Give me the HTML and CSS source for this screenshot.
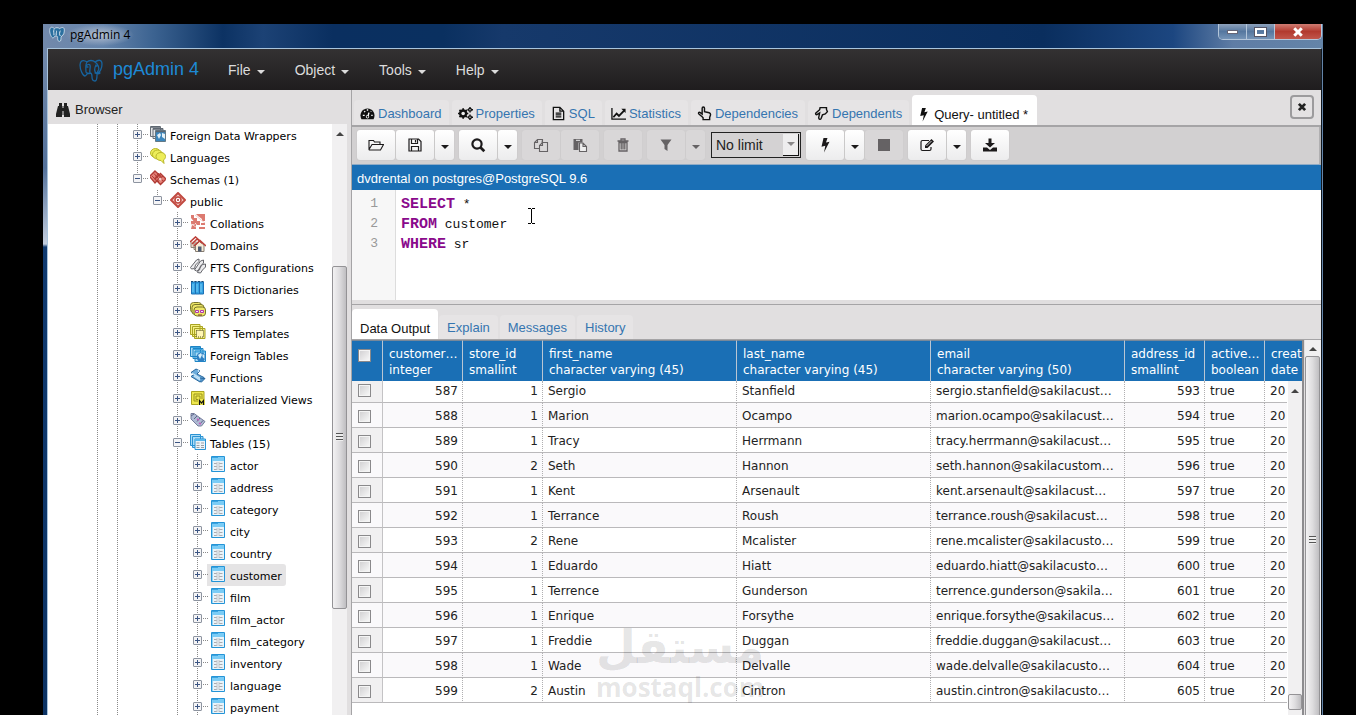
FILE: index.html
```html
<!DOCTYPE html>
<html lang="en">
<head>
<meta charset="UTF-8">
<meta name="viewport" content="width=device-width,initial-scale=1.0">
<title>pgAdmin 4</title>
<link rel="stylesheet" href="styles.css">
</head>
<body>

<svg class="sprite" width="0" height="0" aria-hidden="true">
	<symbol id="elephant" viewBox="0 0 24 24">
		<path d="M8 4C4 1 1 3 1 7c0 5 3 11 5 11 1 0 2-2 3-3M8 4c2-2 6-2 8 0 4-3 7-2 7 2 0 4-2 8-4 9l-2 0M8 4C6 7 7 11 7 14c1 2 3 2 4 1 2 0 2 2 2 4 0 3 1 4 3 4s2-3 2-6c0-2 0-3 1-4 2-3 0-7-3-9M11 15c-1-3 1-5 0-8-1-1-3 0-4 1M17 15c-2-2-1-6 0-8M16 15c2 1 4 1 5 0M8 9h1M17 8h1" fill="none" stroke="currentColor" stroke-width="1.3" stroke-linecap="round"/>
	</symbol>
	<symbol id="elephant-solid" viewBox="0 0 24 24">
		<path d="M8 4C4 0 1 2 1 7c0 5 3 11 5 11 1 0 2-2 3-3l2 0c2 0 2 2 2 4 0 3 1 4 3 4s2-3 2-6l1-2c3-1 4-5 4-9s-3-5-7-2c-2-2-6-2-8 0z" fill="currentColor" stroke="#dce9f2" stroke-width="1.200"/><path d="M7.500 5c-1 3 0 6 0 9M11 14c-1-3 1-5 0-7M17 15c-2-2-1-6 0-8" fill="none" stroke="#dce9f2" stroke-width="1.500"/>
	</symbol>
	<symbol id="binoculars" viewBox="0 0 16 16">
		<path d="M4 1h3v3H4zM9 1h3v3H9zM3 4h4.500v9H7v2H1v-3zM8.500 4H13l2 8v3H9v-2h-.500zM7 6h2v3H7z"/>
	</symbol>
	<symbol id="dashboard" viewBox="0 0 16 16">
		<path d="M1.500 14A7.500 7.500 0 1 1 14.500 14z"/>
		<path d="M3 10h2M4.500 5.500l1 1M8 3.500v1.500M12 5.500l-.500.500M12 10h1.500M8.500 11l1-4" stroke="#fff" stroke-width="1.500" fill="none"/><circle cx="8" cy="11.500" r="1.800" fill="#fff"/><circle cx="8" cy="11.500" r="1"/>
	</symbol>
	<symbol id="cogs" viewBox="0 0 16 16">
		<circle cx="5.500" cy="8" r="3.200" fill="none" stroke="currentColor" stroke-width="2.600"/>
		<path d="M5.500 2.500v11M0 8h11M1.600 4.100l7.800 7.800M9.400 4.100l-7.800 7.800" stroke="currentColor" stroke-width="1.800"/><circle cx="5.500" cy="8" r="1.900" fill="#eee"/>
		<circle cx="12.800" cy="4" r="1.500" fill="none" stroke="currentColor" stroke-width="1.500"/><path d="M12.800 1v1.500M12.800 5.500V7M10 4h1M14.500 4h1.500M12.800 9v1.500M12.800 13.500V15M10 12h1M14.500 12h1.500" stroke="currentColor" stroke-width="1.500"/>
		<circle cx="12.800" cy="12" r="1.500" fill="none" stroke="currentColor" stroke-width="1.500"/>
	</symbol>
	<symbol id="file" viewBox="0 0 16 16">
		<path d="M2.500 1.500h7l4 4v9h-11zM9.500 1.500v4h4M5 7.500h6M5 9.500h6M5 11.500h6" fill="none" stroke="currentColor" stroke-width="1.400"/>
	</symbol>
	<symbol id="chart" viewBox="0 0 16 16">
		<path d="M1 2v12h15" fill="none" stroke="currentColor" stroke-width="1.400"/><path d="M2.500 12l3.500-4 2.500 2.500L14 5" fill="none" stroke="currentColor" stroke-width="2"/><path d="M11 3h4.500v4.500z"/>
	</symbol>
	<symbol id="hand-up" viewBox="0 0 16 16">
		<path d="M5.500 11.500L2 8.500c-1-1 0-2.500 1.500-1.500l2 1.500V2.500c0-2 2.500-2 2.500 0V6l5 1.200c1.300.4 1.500 1 1.500 2l-1 3v2.300h-7v-2z" fill="none" stroke="currentColor" stroke-width="1.500"/>
	</symbol>
	<symbol id="hand-down" viewBox="0 0 16 16">
		<path d="M6 4L2 7.500c-1 1.200.5 2.200 1.500 1.500l2.500-1.500-1 5c0 2 2 2.200 2.700.5L9 9.500l3-1 2.300-2.500-1-2.300V1.700H6.500z" fill="none" stroke="currentColor" stroke-width="1.500"/>
	</symbol>
	<symbol id="bolt" viewBox="0 0 16 16">
		<path d="M6.500 1h4L9 5.500l3.500-.7L7 15.500l1.300-6.700-3.800.900z"/>
	</symbol>
	<symbol id="close" viewBox="0 0 16 16">
		<path d="M3 3l10 10M13 3L3 13" stroke="currentColor" stroke-width="4.500"/>
	</symbol>
	<symbol id="folder" viewBox="0 0 16 16">
		<path d="M1 12.500V3.500h4.500l1 1.500h5.500v2.500M1 12.500l3-5h11.500l-3 5.500H1.300z" fill="none" stroke="currentColor" stroke-width="1.100"/>
	</symbol>
	<symbol id="save" viewBox="0 0 16 16">
		<path d="M2 2h9.500L14 4.500V14H2zM4.500 14V9.500h7V14M4.500 2v4.500h6V2M8.500 3v2.500" fill="none" stroke="currentColor" stroke-width="1.200"/>
	</symbol>
	<symbol id="search" viewBox="0 0 16 16">
		<circle cx="7" cy="7" r="4.600" fill="none" stroke="currentColor" stroke-width="2.200"/><path d="M10.300 10.300l4 4" stroke="currentColor" stroke-width="2.700"/>
	</symbol>
	<symbol id="copy" viewBox="0 0 16 16">
		<path d="M6.500 11.500h-5v-6L4.500 2.500h5v3M4.500 2.500v3h-3M6.500 13.500v-5l3-3h5v9h-8zM9.500 5.500v3h-3M9.500 2.500l-.500 3" fill="none" stroke="currentColor" stroke-width="1.100"/>
	</symbol>
	<symbol id="paste" viewBox="0 0 16 16">
		<path d="M1.500 2h9v3.500h-4V13h-5z"/><path d="M4 3.300h4" stroke="#eee"/><path d="M7.500 6h3.500l3.500 3.500v5h-7zM11 6v3.500h3.500" fill="#eee" stroke="currentColor" stroke-width="1.100"/>
	</symbol>
	<symbol id="trash" viewBox="0 0 16 16">
		<path d="M2.500 4h11M6 3.500V2h4v1.500M4 5.500v8.500h8V5.500zM6.200 6v6.500M8 6v6.500M9.800 6v6.500" fill="none" stroke="currentColor" stroke-width="1.300"/>
	</symbol>
	<symbol id="filter" viewBox="0 0 16 16"><path d="M2.500 2.500h11L9.500 8v6l-3-2V8z"/></symbol>
	<symbol id="stop" viewBox="0 0 16 16"><path d="M2 2h12v12H2z"/></symbol>
	<symbol id="edit" viewBox="0 0 16 16">
		<path d="M10 3.500H3.500Q2 3.500 2 5v7q0 1.500 1.500 1.500h7Q12 13.500 12 12v-2" fill="none" stroke="currentColor" stroke-width="1.200"/><path d="M6 11V8.500L12.500 2 15 4.500 8.500 11z"/><path d="M7.500 9l5-5" stroke="#fff" stroke-width=".8"/>
	</symbol>
	<symbol id="download" viewBox="0 0 16 16">
		<path d="M6.500 1.500h3V6H13L8 10.500 3 6h3.500zM1 10.500h4l3 2.500 3-2.500h4v4H1z"/>
	</symbol>
	<symbol id="caret" viewBox="0 0 8 4"><path d="M0 0h8L4 4z"/></symbol>
	<symbol id="caret-up" viewBox="0 0 8 4"><path d="M0 4h8L4 0z"/></symbol>

	<symbol id="i-wrapper" viewBox="0 0 16 16">
		<path d="M.5.5h10v10H.5zM3 2.500h10v10H3z" fill="#e4e6e8" stroke="#687078"/><path d="M5.500 4.500h10v11h-10z" fill="#3b86bd" stroke="#647985"/><path d="M1 1h9M3 3h10M6 5.500h9" stroke="#5c6670" stroke-width="1.500"/><path d="M7 9l3-2 1 2-2 4zM12 7l3 1v5l-3-2z" fill="#e2f0f8"/>
	</symbol>
	<symbol id="i-language" viewBox="0 0 16 16">
		<g fill="#eded59" stroke="#b8b62b"><ellipse cx="5.500" cy="5" rx="5" ry="4.500"/><ellipse cx="7.500" cy="6.500" rx="5" ry="4.500"/><path d="M11 4.500c3 0 4.500 2 4.500 4 0 1.500-1 3-2 3.500l.5 3.500-3-3c-3 0-5-1.500-5-4 0-2.500 2-4 5-4z"/></g>
	</symbol>
	<symbol id="i-schemas" viewBox="0 0 16 16">
		<path d="M5 1l6 5.500L5 13-.500 6.500zM10.500 3.500L16 9l-5.500 5.500L5 9z" fill="#e58279" stroke="#b03b35" stroke-width="1.300"/><path d="M2 6l4 4M4 3.500l6 7M7 4l6 7M8 12l5-6M4 9l5-6" stroke="#b03b35"/><path d="M10 7.500L12 9l-2 2-1.500-2z" fill="#f5d0cb"/>
	</symbol>
	<symbol id="i-schema" viewBox="0 0 16 16">
		<path d="M8 1l7 7-7 7-7-7z" fill="#f5c9c4" stroke="#c14a41" stroke-width="2" stroke-linejoin="round"/><circle cx="8" cy="8" r="3" fill="#fff" stroke="#c14a41" stroke-width="1.600"/><circle cx="8" cy="8" r="1" fill="#a33"/>
	</symbol>
	<symbol id="i-collation" viewBox="0 0 16 16">
		<path d="M1 1h3v3h3v3h3v4H7L1 4zM6 0h9v7h-3V5L8 2zM1 7h4v3H1zM2 11l4-1v5H1zM11 9h4v2h-4zM9 13h6v2H9z" fill="#dc7a70"/><path d="M5 1l10 8M1 10l5 3" stroke="#f3cfca"/>
	</symbol>
	<symbol id="i-domain" viewBox="0 0 16 16">
		<path d="M1 5.500v6h5v-6M4 6.500v7h6v-7" fill="#e9d8c8" stroke="#8f8379"/><path d="M5.500 9v6.500h8.500V9L9.500 5.500z" fill="#f6ecd7" stroke="#887e72"/><path d="M0 6l5.500-5L10 5M2 8l5-5 5 4M4 10l6-5.500 6 5.500" fill="none" stroke="#bd3f38" stroke-width="1.600"/><path d="M8 10.500h3.500v5H8z" fill="#4c5b72"/>
	</symbol>
	<symbol id="i-config" viewBox="0 0 16 16">
		<path d="M.5 9.500L2.500 7l4-5L9 1v2.500L5.500 7l-1 3.500-3 .500zM4.500 12l2-3 4-6 3-1v3l-3 3-1 4-3 1zM7.500 14.500l1-3 4-5 3-.500v3l-3 3-2 3z" fill="#ececee" stroke="#65666c"/>
	</symbol>
	<symbol id="i-dictionary" viewBox="0 0 16 16">
		<path d="M1.500 2h4v12h-4zM5.500 2h4v12h-4zM9.500 2h4v12h-4z" fill="#35a3e3" stroke="#1d71b5"/><path d="M1 1.500h13" stroke="#1b4c77" stroke-dasharray="2 1.500"/><path d="M3 4v8M7 4v8M11 4v8" stroke="#79cdf6"/>
	</symbol>
	<symbol id="i-parser" viewBox="0 0 16 16">
		<g fill="#eee666" stroke="#78752a"><rect x=".5" y=".5" width="11" height="10" rx="3"/><rect x="2" y="2.500" width="12" height="10" rx="3"/><rect x="4" y="5" width="11.500" height="9" rx="3"/></g><path d="M5.500 8.500h3v2h-3zM10.500 8.500h3v2h-3z" fill="#fae7ff" stroke="#b137a8"/><path d="M8 13h4" stroke="#7c332c"/>
	</symbol>
	<symbol id="i-template" viewBox="0 0 16 16">
		<path d="M.5.5h9.500v10H.5zM2.500 2.500h10v10h-10zM4.500 4.500h10.500v10H4.500z" fill="#f3f085" stroke="#aaa422"/><path d="M6.500 6.500h7v6.500h-7z" fill="#fff6b5" stroke="#4e4b29" stroke-dasharray="1 1"/>
	</symbol>
	<symbol id="i-foreign" viewBox="0 0 16 16">
		<path d="M.5.5h10v10H.5zM3 2.500h10v10H3zM5 5h10.500v10.500H5z" fill="#a9dbf6" stroke="#1e84c4"/><path d="M1 1.500h9M3 3.500h9M5 6h10" stroke="#38a3df"/><circle cx="11" cy="11" r="4.500" fill="#2d7fc3"/><path d="M8 9l3-2 1 2-2 4zM12.500 8l2 1v4l-2-2z" fill="#d8effa"/>
	</symbol>
	<symbol id="i-function" viewBox="0 0 16 16">
		<path d="M1 4.500l5-3.500 4 2-3 3L14 9.500l-4 4.500-9-5.500 3-2z" fill="#6dacdb" stroke="#28679d"/><path d="M2 5l9 6M4 8l6 4M8 2l1 2" stroke="#c9e6f8" stroke-width="1.300"/><path d="M10 10l5 .500-4 4" fill="#4f93ca" stroke="#28679d"/>
	</symbol>
	<symbol id="i-matview" viewBox="0 0 16 16">
		<path d="M1.500 1.500h12.500v13H1.500z" fill="#efe84e" stroke="#aaa422"/><path d="M4 4h8v7H4zM6 6h4v3.500H6z" fill="none" stroke="#99931d"/><path d="M8 9h7v6H8z" fill="#efe84e"/><path d="M9.500 15v-4.500l2 2.500 2-2.500V15" fill="none" stroke="#111" stroke-width="1.200"/>
	</symbol>
	<symbol id="i-sequence" viewBox="0 0 16 16">
		<path d="M1 1.500h3L15 9.500l-3.500 4.500L8 14 1 7z" fill="#afbbd4" stroke="#747c9b"/><path d="M1 4l3-2M4 7l3-3M7 9.500L10 6M10 12l3-3.500" stroke="#5e6789"/><path d="M7 7l2 1M9 11l2 1" stroke="#c260bc" stroke-width="1.500"/>
	</symbol>
	<symbol id="i-tables" viewBox="0 0 16 16">
		<path d="M.5.5h10v11H.5zM2.500 2.500h10.500v11H2.500z" fill="#a9dbf6" stroke="#2b93d3"/><path d="M5 5h10.500v10.500H5z" fill="#ecf4f9" stroke="#2b93d3"/><path d="M5 6h10" stroke="#58b8ec" stroke-width="2"/><path d="M6.500 9h3M11 9h3M6.500 11.500h3M11 11.500h3M6.500 13.500h3M11 13.500h3" stroke="#9b9fa5"/>
	</symbol>
	<symbol id="i-table" viewBox="0 0 16 16">
		<path d="M1.500.5h13v15h-13z" fill="#e9f3f9" stroke="#2494d7"/><path d="M2 3h12" stroke="#7accf6" stroke-width="4"/><path d="M2 1.500h6" stroke="#3aa4e0"/><path d="M2.500 5v10" stroke="#8fd3f7"/><path d="M4 7.500h3M9 7.500h3.500M4 10.500h3M9 10.500h3.500M4 13.500h3M9 13.500h3.500" stroke="#a9abb0"/><path d="M7 6v8M9 6v8" stroke="#c3c5c9"/>
	</symbol>
</svg>

<div class="window">
	<header class="titlebar">
		<svg class="title-icon"><use href="#elephant-solid"/></svg>
		<span class="title-text">pgAdmin 4</span>
		<div class="win-buttons">
			<button class="win-btn" aria-label="Minimize"><i class="glyph-min"></i></button>
			<button class="win-btn" aria-label="Maximize"><i class="glyph-max"></i></button>
			<button class="win-btn win-close" aria-label="Close window"><svg width="14" height="12" viewBox="0 0 16 16"><path d="M3 3l10 10M13 3L3 13" stroke="#fff" stroke-width="4"/></svg></button>
		</div>
	</header>

	<div class="app">
		<nav class="navbar">
			<a class="brand" href="#"><svg><use href="#elephant"/></svg>pgAdmin 4</a>
			<button class="menu">File<svg class="caret"><use href="#caret"/></svg></button>
			<button class="menu">Object<svg class="caret"><use href="#caret"/></svg></button>
			<button class="menu">Tools<svg class="caret"><use href="#caret"/></svg></button>
			<button class="menu">Help<svg class="caret"><use href="#caret"/></svg></button>
		</nav>

		<div class="panes">
			<aside class="browser">
				<h2 class="browser-title"><svg class="icon"><use href="#binoculars"/></svg>Browser</h2>
				<div class="browser-body">
					<ul class="tree">
						<li><ul>
							<li><ul>
								<li><div class="node"><button class="toggle plus" aria-label="Expand"></button><svg><use href="#i-wrapper"/></svg><a href="#">Foreign Data Wrappers</a></div></li>
								<li><div class="node"><button class="toggle plus" aria-label="Expand"></button><svg><use href="#i-language"/></svg><a href="#">Languages</a></div></li>
								<li class="last"><div class="node"><button class="toggle" aria-label="Collapse"></button><svg><use href="#i-schemas"/></svg><a href="#">Schemas (1)</a></div>
									<ul>
										<li class="last"><div class="node"><button class="toggle" aria-label="Collapse"></button><svg><use href="#i-schema"/></svg><a href="#">public</a></div>
											<ul>
												<li><div class="node"><button class="toggle plus" aria-label="Expand"></button><svg><use href="#i-collation"/></svg><a href="#">Collations</a></div></li>
												<li><div class="node"><button class="toggle plus" aria-label="Expand"></button><svg><use href="#i-domain"/></svg><a href="#">Domains</a></div></li>
												<li><div class="node"><button class="toggle plus" aria-label="Expand"></button><svg><use href="#i-config"/></svg><a href="#">FTS Configurations</a></div></li>
												<li><div class="node"><button class="toggle plus" aria-label="Expand"></button><svg><use href="#i-dictionary"/></svg><a href="#">FTS Dictionaries</a></div></li>
												<li><div class="node"><button class="toggle plus" aria-label="Expand"></button><svg><use href="#i-parser"/></svg><a href="#">FTS Parsers</a></div></li>
												<li><div class="node"><button class="toggle plus" aria-label="Expand"></button><svg><use href="#i-template"/></svg><a href="#">FTS Templates</a></div></li>
												<li><div class="node"><button class="toggle plus" aria-label="Expand"></button><svg><use href="#i-foreign"/></svg><a href="#">Foreign Tables</a></div></li>
												<li><div class="node"><button class="toggle plus" aria-label="Expand"></button><svg><use href="#i-function"/></svg><a href="#">Functions</a></div></li>
												<li><div class="node"><button class="toggle plus" aria-label="Expand"></button><svg><use href="#i-matview"/></svg><a href="#">Materialized Views</a></div></li>
												<li><div class="node"><button class="toggle plus" aria-label="Expand"></button><svg><use href="#i-sequence"/></svg><a href="#">Sequences</a></div></li>
												<li><div class="node"><button class="toggle" aria-label="Collapse"></button><svg><use href="#i-tables"/></svg><a href="#">Tables (15)</a></div>
													<ul>
														<li><div class="node"><button class="toggle plus" aria-label="Expand"></button><svg><use href="#i-table"/></svg><a href="#">actor</a></div></li>
														<li><div class="node"><button class="toggle plus" aria-label="Expand"></button><svg><use href="#i-table"/></svg><a href="#">address</a></div></li>
														<li><div class="node"><button class="toggle plus" aria-label="Expand"></button><svg><use href="#i-table"/></svg><a href="#">category</a></div></li>
														<li><div class="node"><button class="toggle plus" aria-label="Expand"></button><svg><use href="#i-table"/></svg><a href="#">city</a></div></li>
														<li><div class="node"><button class="toggle plus" aria-label="Expand"></button><svg><use href="#i-table"/></svg><a href="#">country</a></div></li>
														<li><div class="node selected"><button class="toggle plus" aria-label="Expand"></button><svg><use href="#i-table"/></svg><a href="#">customer</a></div></li>
														<li><div class="node"><button class="toggle plus" aria-label="Expand"></button><svg><use href="#i-table"/></svg><a href="#">film</a></div></li>
														<li><div class="node"><button class="toggle plus" aria-label="Expand"></button><svg><use href="#i-table"/></svg><a href="#">film_actor</a></div></li>
														<li><div class="node"><button class="toggle plus" aria-label="Expand"></button><svg><use href="#i-table"/></svg><a href="#">film_category</a></div></li>
														<li><div class="node"><button class="toggle plus" aria-label="Expand"></button><svg><use href="#i-table"/></svg><a href="#">inventory</a></div></li>
														<li><div class="node"><button class="toggle plus" aria-label="Expand"></button><svg><use href="#i-table"/></svg><a href="#">language</a></div></li>
														<li><div class="node"><button class="toggle plus" aria-label="Expand"></button><svg><use href="#i-table"/></svg><a href="#">payment</a></div></li>
													</ul>
												</li>
											</ul>
										</li>
									</ul>
								</li>
							</ul></li>
						</ul></li>
					</ul>
					<div class="scrollbar tree-scroll">
						<svg class="caret"><use href="#caret-up"/></svg>
						<div class="thumb"><i class="grip"></i></div>
					</div>
				</div>
			</aside>

			<main class="work">
				<div class="tabs">
					<a class="tab" href="#"><svg class="icon"><use href="#dashboard"/></svg>Dashboard</a>
					<a class="tab" href="#"><svg class="icon"><use href="#cogs"/></svg>Properties</a>
					<a class="tab" href="#"><svg class="icon"><use href="#file"/></svg>SQL</a>
					<a class="tab" href="#"><svg class="icon"><use href="#chart"/></svg>Statistics</a>
					<a class="tab" href="#"><svg class="icon"><use href="#hand-up"/></svg>Dependencies</a>
					<a class="tab" href="#"><svg class="icon"><use href="#hand-down"/></svg>Dependents</a>
					<a class="tab active" href="#"><svg class="icon"><use href="#bolt"/></svg>Query- untitled *</a>
					<button class="tab-close" aria-label="Close tab"><svg><use href="#close"/></svg></button>
				</div>

				<div class="toolbar">
					<div class="group">
						<button class="btn" aria-label="Open file"><svg class="icon"><use href="#folder"/></svg></button>
						<button class="btn" aria-label="Save"><svg class="icon"><use href="#save"/></svg></button>
						<button class="btn drop" aria-label="Save options"><svg class="caret"><use href="#caret"/></svg></button>
					</div>
					<div class="group">
						<button class="btn" aria-label="Find"><svg class="icon"><use href="#search"/></svg></button>
						<button class="btn drop" aria-label="Find options"><svg class="caret"><use href="#caret"/></svg></button>
					</div>
					<div class="group">
						<button class="btn" disabled aria-label="Copy"><svg class="icon"><use href="#copy"/></svg></button>
						<button class="btn" disabled aria-label="Paste"><svg class="icon"><use href="#paste"/></svg></button>
					</div>
					<div class="group">
						<button class="btn" disabled aria-label="Delete"><svg class="icon"><use href="#trash"/></svg></button>
					</div>
					<div class="group">
						<button class="btn" disabled aria-label="Filter"><svg class="icon"><use href="#filter"/></svg></button>
						<button class="btn drop" disabled aria-label="Filter options"><svg class="caret"><use href="#caret"/></svg></button>
					</div>
					<label class="limit">
						<select aria-label="Row limit"><option>No limit</option></select>
						<span class="limit-arrow"><svg class="caret"><use href="#caret"/></svg></span>
					</label>
					<div class="group">
						<button class="btn" aria-label="Execute"><svg class="icon"><use href="#bolt"/></svg></button>
						<button class="btn drop" aria-label="Execute options"><svg class="caret"><use href="#caret"/></svg></button>
						<button class="btn" disabled aria-label="Stop"><svg class="icon"><use href="#stop"/></svg></button>
					</div>
					<div class="group">
						<button class="btn" aria-label="Edit"><svg class="icon"><use href="#edit"/></svg></button>
						<button class="btn drop" aria-label="Edit options"><svg class="caret"><use href="#caret"/></svg></button>
					</div>
					<div class="group">
						<button class="btn" aria-label="Download as CSV"><svg class="icon"><use href="#download"/></svg></button>
					</div>
				</div>

				<div class="connection">dvdrental on postgres@PostgreSQL 9.6</div>

				<div class="editor">
					<div class="gutter"><div>1</div><div>2</div><div>3</div></div>
					<div class="code" contenteditable="true" spellcheck="false" role="textbox" aria-label="Query">
						<div><b>SELECT</b> *</div>
						<div><b>FROM</b> customer</div>
						<div><b>WHERE</b> sr</div>
					</div>
					<svg class="ibeam" viewBox="0 0 7 16"><path d="M0 .5h3M4 .5h3M3.500 1v14M0 15.500h3M4 15.500h3" stroke="#000"/></svg>
				</div>

				<div class="tabs output-tabs">
					<a class="tab active" href="#">Data Output</a>
					<a class="tab" href="#">Explain</a>
					<a class="tab" href="#">Messages</a>
					<a class="tab" href="#">History</a>
				</div>

				<div class="output">
					<div class="grid">
						<table>
							<colgroup><col class="c-check"><col class="c-num"><col class="c-num"><col class="c-text"><col class="c-text"><col class="c-text"><col class="c-num"><col class="c-bool"><col class="c-num"></colgroup>
							<thead>
								<tr>
									<th><input type="checkbox" aria-label="Select all rows"></th>
									<th>customer…<br>integer</th>
									<th>store_id<br>smallint</th>
									<th>first_name<br>character varying (45)</th>
									<th>last_name<br>character varying (45)</th>
									<th>email<br>character varying (50)</th>
									<th>address_id<br>smallint</th>
									<th>active…<br>boolean</th>
									<th>creat<br>date</th>
								</tr>
							</thead>
							<tbody>
								<tr class="cut"><td><input type="checkbox" aria-label="Row 587"></td><td class="num">587</td><td class="num">1</td><td>Sergio</td><td>Stanfield</td><td>sergio.stanfield@sakilacust…</td><td class="num">593</td><td>true</td><td>20</td></tr>
								<tr><td><input type="checkbox" aria-label="Row 588"></td><td class="num">588</td><td class="num">1</td><td>Marion</td><td>Ocampo</td><td>marion.ocampo@sakilacust…</td><td class="num">594</td><td>true</td><td>20</td></tr>
								<tr><td><input type="checkbox" aria-label="Row 589"></td><td class="num">589</td><td class="num">1</td><td>Tracy</td><td>Herrmann</td><td>tracy.herrmann@sakilacust…</td><td class="num">595</td><td>true</td><td>20</td></tr>
								<tr><td><input type="checkbox" aria-label="Row 590"></td><td class="num">590</td><td class="num">2</td><td>Seth</td><td>Hannon</td><td>seth.hannon@sakilacustom…</td><td class="num">596</td><td>true</td><td>20</td></tr>
								<tr><td><input type="checkbox" aria-label="Row 591"></td><td class="num">591</td><td class="num">1</td><td>Kent</td><td>Arsenault</td><td>kent.arsenault@sakilacust…</td><td class="num">597</td><td>true</td><td>20</td></tr>
								<tr><td><input type="checkbox" aria-label="Row 592"></td><td class="num">592</td><td class="num">1</td><td>Terrance</td><td>Roush</td><td>terrance.roush@sakilacust…</td><td class="num">598</td><td>true</td><td>20</td></tr>
								<tr><td><input type="checkbox" aria-label="Row 593"></td><td class="num">593</td><td class="num">2</td><td>Rene</td><td>Mcalister</td><td>rene.mcalister@sakilacusto…</td><td class="num">599</td><td>true</td><td>20</td></tr>
								<tr><td><input type="checkbox" aria-label="Row 594"></td><td class="num">594</td><td class="num">1</td><td>Eduardo</td><td>Hiatt</td><td>eduardo.hiatt@sakilacusto…</td><td class="num">600</td><td>true</td><td>20</td></tr>
								<tr><td><input type="checkbox" aria-label="Row 595"></td><td class="num">595</td><td class="num">1</td><td>Terrence</td><td>Gunderson</td><td>terrence.gunderson@sakila…</td><td class="num">601</td><td>true</td><td>20</td></tr>
								<tr><td><input type="checkbox" aria-label="Row 596"></td><td class="num">596</td><td class="num">1</td><td>Enrique</td><td>Forsythe</td><td>enrique.forsythe@sakilacus…</td><td class="num">602</td><td>true</td><td>20</td></tr>
								<tr><td><input type="checkbox" aria-label="Row 597"></td><td class="num">597</td><td class="num">1</td><td>Freddie</td><td>Duggan</td><td>freddie.duggan@sakilacust…</td><td class="num">603</td><td>true</td><td>20</td></tr>
								<tr><td><input type="checkbox" aria-label="Row 598"></td><td class="num">598</td><td class="num">1</td><td>Wade</td><td>Delvalle</td><td>wade.delvalle@sakilacusto…</td><td class="num">604</td><td>true</td><td>20</td></tr>
								<tr><td><input type="checkbox" aria-label="Row 599"></td><td class="num">599</td><td class="num">2</td><td>Austin</td><td>Cintron</td><td>austin.cintron@sakilacusto…</td><td class="num">605</td><td>true</td><td>20</td></tr>
							</tbody>
						</table>
						<div class="scrollbar grid-scroll">
							<svg class="caret"><use href="#caret-up"/></svg>
							<div class="thumb"></div>
						</div>
						<div class="watermark"><span lang="ar" dir="rtl">مستقل</span><span>mostaql.com</span></div>
					</div>
					<div class="scrollbar page-scroll">
						<svg class="caret"><use href="#caret-up"/></svg>
						<div class="thumb"><i class="grip"></i></div>
					</div>
				</div>
			</main>
		</div>
	</div>
</div>

</body>
</html>
```
FILE: styles.css
```css
:root {
	--blue: #1a6fb5;
	--link: #3575b0;
	--panel: #e1dfe0;
	--line: #a5a4a6;
	--ui: "Liberation Sans", Arial, sans-serif;
	--wide: "DejaVu Sans", Verdana, sans-serif;
}
* {
	box-sizing: border-box;
}
body {
	margin: 0;
	height: 100vh;
	padding: 24px 33px 0 43px;
	overflow: hidden;
	background: #000;
	font-family: var(--ui);
	font-size: 13px;
	color: #222;
}
svg {
	fill: currentColor;
	flex: none;
}
button {
	padding: 0;
	font: inherit;
	color: inherit;
}
a {
	color: inherit;
	text-decoration: none;
}
ul {
	list-style: none;
	margin: 0;
	padding: 0;
}
.sprite {
	position: absolute;
}
.icon {
	width: 16px;
	height: 16px;
}
.caret {
	width: 8px;
	height: 4px;
}

/* window frame */
.window {
	height: 100%;
	display: flex;
	flex-direction: column;
	padding: 0 1px 0 4px;
	background: linear-gradient(#7289ab 0, #54719a 120px, #c3cddd 196px, #103a70 199px, #0c3263 100%) no-repeat 0 24px / 4px 100%, linear-gradient(90deg, #7289ab 0, #6685ac 60px, #3c6391 110px, #0c3263 180px, #1c4275 220px, #0a2f60 290px, #0a3060 400px, #16396b 460px, #0a2e5e 1000px, #1c4680 1130px, #5f7da5 1190px, #6484a8 100%);
}
.titlebar {
	height: 24px;
	flex: none;
	display: flex;
	align-items: flex-start;
}
.title-icon {
	width: 16px;
	height: 16px;
	margin: 2px 0 0 2px;
	color: #2a6f9f;
}
.title-text {
	margin: 0 auto 0 1px;
	padding: 1px 4px;
	font-family: "Open Sans", sans-serif;
	font-size: 12px;
	line-height: 20px;
	color: #000;
	background: radial-gradient(closest-side, #b4bfd0, transparent);
}
.win-buttons {
	display: flex;
	height: 16px;
	border: 1px solid #b4c6da;
	border-top: 0;
	border-radius: 0 0 5px 5px;
	overflow: hidden;
}
.win-btn {
	width: 28px;
	display: flex;
	align-items: center;
	justify-content: center;
	border: 0;
	border-right: 1px solid #b4c6da;
	background: linear-gradient(#8da1bb, #55779f 50%, #7594b7);
}
.win-close {
	width: 46px;
	border-right: 0;
	background: linear-gradient(#cf7c72, #b23a2f 50%, #c1564b);
}
.glyph-min {
	width: 11px;
	height: 4px;
	background: #fff;
	border: 1px solid #667;
}
.glyph-max {
	width: 11px;
	height: 8px;
	border: 2px solid #fff;
	outline: 1px solid #556;
}
.app {
	flex: 1;
	min-height: 0;
	display: flex;
	flex-direction: column;
	border-top: 1px solid #a9c4dc;
	border-left: 1px solid #a9c4dc;
	border-right: 1px solid #101820;
	background: var(--panel);
}

/* top menu */
.navbar {
	height: 41px;
	flex: none;
	display: flex;
	align-items: center;
	padding-left: 31px;
	background: linear-gradient(#333132, #1f1d1e);
	color: #dcdcdc;
}
.brand {
	display: flex;
	align-items: center;
	gap: 10px;
	margin-right: 18px;
	font-size: 18px;
	color: #1d8ad6;
}
.brand svg {
	width: 24px;
	height: 24px;
	color: #17649f;
}
.menu {
	display: flex;
	align-items: center;
	gap: 6px;
	padding: 0 11px;
	margin-right: 8px;
	border: 0;
	background: none;
	font-size: 14px;
}
.menu .caret {
	margin-top: 4px;
}

.panes {
	flex: 1;
	min-height: 0;
	display: flex;
}

/* object browser */
.browser {
	width: 304px;
	flex: none;
	display: flex;
	flex-direction: column;
	border-right: 1px solid var(--line);
	padding-right: 4px;
}
.browser-title {
	display: flex;
	align-items: center;
	gap: 4px;
	height: 34px;
	flex: none;
	margin: 0;
	padding: 5px 0 0 7px;
	font-size: 13px;
	font-weight: normal;
}
.browser-body {
	flex: 1;
	min-height: 0;
	display: flex;
	background: #fff;
}
.tree {
	flex: 1;
	min-width: 0;
	overflow: hidden;
	padding-left: 49px;
	font-family: var(--wide);
	font-size: 11px;
	color: #000;
}
.tree li {
	padding-left: 20px;
	background: repeating-linear-gradient(#8a8a8a 0 1px, transparent 1px 2px) no-repeat 0 0 / 1px 100%;
}
.tree li.last {
	background-size: 1px 11px;
}
.node {
	display: flex;
	align-items: center;
	height: 22px;
	margin-left: -24px;
	width: max-content;
	white-space: nowrap;
	background: repeating-linear-gradient(90deg, #8a8a8a 0 1px, transparent 1px 2px) no-repeat 10px 10px / 6px 1px;
}
.node svg {
	width: 16px;
	height: 16px;
	margin: 0 4px 2px 0;
}
.node a {
	padding-top: 2px;
}
.toggle {
	width: 9px;
	height: 9px;
	margin: 0 8px 2px 0;
	border: 1px solid #8d94a0;
	border-radius: 1px;
	background: linear-gradient(#3b5583, #3b5583) no-repeat center / 5px 1px, #f4f4f6;
}
.toggle.plus {
	background: linear-gradient(#3b5583, #3b5583) no-repeat center / 5px 1px, linear-gradient(#3b5583, #3b5583) no-repeat center / 1px 5px, #f4f4f6;
}
.selected {
	padding-right: 4px;
	border-radius: 3px;
	background: repeating-linear-gradient(90deg, #8a8a8a 0 1px, transparent 1px 2px) no-repeat 10px 10px / 5px 1px, linear-gradient(#e5e4e5, #e5e4e5) no-repeat 14px 0 / 100% 100%;
}

/* scrollbars */
.scrollbar {
	width: 15px;
	flex: none;
	display: flex;
	flex-direction: column;
	align-items: center;
	background: #f1f0f1;
	color: #444;
}
.scrollbar > .caret {
	margin: 8px 0 5px;
}
.thumb {
	width: 100%;
	display: flex;
	align-items: center;
	justify-content: center;
	border: 1px solid #949396;
	border-radius: 2px;
	background: linear-gradient(90deg, #f3f2f3, #dedddf 50%, #bfbec1);
}
.grip {
	width: 7px;
	height: 8px;
	background: repeating-linear-gradient(#555 0 1px, #eee 1px 3px);
}
.tree-scroll .thumb {
	height: 58%;
	margin-top: 125px;
}

/* main panel */
.work {
	flex: 1;
	min-width: 0;
	display: flex;
	flex-direction: column;
}
.tabs {
	display: flex;
	align-items: flex-end;
	height: 37px;
	flex: none;
	padding-left: 2px;
	border-bottom: 2px solid var(--line);
}
.tab {
	display: flex;
	align-items: center;
	gap: 3px;
	height: 25px;
	margin-right: 3px;
	padding: 1px 7px 0 6px;
	border-radius: 4px 4px 0 0;
	background: #e6e4e5;
	color: var(--link);
	white-space: nowrap;
}
.tab .icon {
	width: 15px;
	height: 15px;
	color: #111;
}
.tab.active {
	height: 30px;
	padding: 8px 9px 0 4px;
	background: #fff;
	color: #111;
}
.tab-close {
	width: 24px;
	height: 24px;
	margin: 0 7px 6px auto;
	display: flex;
	align-items: center;
	justify-content: center;
	border: 2px solid #9c9b9d;
	border-radius: 4px;
	background: #e4e2e3;
}
.tab-close svg {
	width: 10px;
	height: 10px;
}

.toolbar {
	display: flex;
	align-items: center;
	gap: 5px;
	height: 38px;
	flex: none;
	padding: 0 5px 2px;
	border-right: 2px solid #b0afb1;
	border-bottom: 1px solid #8fabc6;
	background: #d2d0d1;
}
.group {
	display: flex;
	gap: 1px;
}
.btn {
	width: 38px;
	height: 30px;
	display: flex;
	align-items: center;
	justify-content: center;
	border: 0;
	border-radius: 3px;
	background: linear-gradient(#fff, #ececed);
	box-shadow: 0 0 1px #aaa;
	color: #1c1a1b;
}
.btn:disabled {
	background: #d9d7d8;
	color: #656264;
	box-shadow: 0 0 1px #c4c2c3;
}
.drop {
	width: 19px;
}
.drop .caret {
	margin-top: 5px;
}
.limit {
	position: relative;
	width: 90px;
	height: 26px;
	margin-left: 1px;
}
.limit select {
	width: 100%;
	height: 100%;
	padding: 0 4px;
	appearance: none;
	border: 1px solid #222;
	border-radius: 0;
	background: #d4d2d3;
	font: 14px var(--ui);
	color: #222;
}
.limit-arrow {
	position: absolute;
	top: 2px;
	right: 2px;
	width: 16px;
	height: 22px;
	display: flex;
	align-items: center;
	justify-content: center;
	border-right: 1px solid #111;
	border-bottom: 1px solid #111;
	background: #eeedee;
	color: #8a8889;
	pointer-events: none;
}
.connection {
	flex: none;
	height: 25px;
	padding: 1px 5px 0;
	line-height: 26px;
	background: var(--blue);
	color: #fff;
}

/* query editor */
.editor {
	position: relative;
	height: 110px;
	flex: none;
	display: flex;
	background: #fff;
	font-family: "Liberation Mono", "Courier New", monospace;
	font-size: 13px;
	line-height: 20px;
}
.gutter {
	width: 44px;
	padding: 4px 17px 0 0;
	border-right: 1px solid #ddd;
	background: #f7f7f7;
	color: #999;
	text-align: right;
}
.code {
	flex: 1;
	padding: 5px 5px 0;
	color: #111;
	outline: 0;
}
.code b {
	font-size: 15px;
	line-height: 1;
	color: #8a0a8c;
}
.ibeam {
	position: absolute;
	left: 176px;
	top: 18px;
	width: 7px;
	height: 16px;
}

/* results */
.output-tabs {
	height: 40px;
	padding-left: 0;
	border-top: 4px solid #e0dedf;
	border-bottom-width: 1px;
	box-shadow: inset 0 1px var(--line);
}
.output-tabs .tab {
	height: 24px;
	padding: 0 8px;
	margin-right: 2px;
}
.output-tabs .tab.active {
	height: 30px;
	padding-top: 8px;
	margin-right: 1px;
}
.output {
	flex: 1;
	min-height: 0;
	display: flex;
	gap: 1px;
}
.grid {
	position: relative;
	flex: 1;
	min-width: 0;
	overflow: hidden;
	border-right: 2px solid #8c8b8e;
	background: #fff;
	font-family: var(--wide);
	font-size: 12px;
}
.grid table {
	width: 992px;
	table-layout: fixed;
	border-collapse: separate;
	border-spacing: 0;
}
.c-check { width: 31px; }
.c-num { width: 80px; }
.c-text { width: 194px; }
.c-bool { width: 60px; }
.grid th {
	height: 41px;
	padding: 5px 0 0 6px;
	overflow: hidden;
	border-right: 1px solid #b9c6d3;
	border-top: 1px solid #77889a;
	background: var(--blue);
	color: #fff;
	font-weight: normal;
	line-height: 16px;
	text-align: left;
	vertical-align: top;
	white-space: nowrap;
}
.grid td {
	height: 25px;
	padding: 2px 4px 0 5px;
	overflow: hidden;
	border-right: 1px dotted #b0afb1;
	border-bottom: 1px solid #bab9bb;
	line-height: 22px;
	white-space: nowrap;
}
.grid tr:nth-child(even) td {
	background: #faf9fb;
}
.grid .cut td {
	height: 22px;
	padding-top: 0;
	line-height: 20px;
	vertical-align: top;
}
.grid td:first-child {
	padding-left: 6px;
	background: #f1f0f1;
	border-right: 1px solid #c4c3c5;
}
.grid input {
	display: block;
	width: 13px;
	height: 13px;
	margin: 0;
	appearance: none;
	border: 1px solid #8a898b;
	background: linear-gradient(135deg, #cfced0, #fafafa);
	box-shadow: inset 0 0 0 1px #f4f4f4;
}
.grid th input,
.grid .cut input {
	margin-top: 3px;
}
.grid .num {
	text-align: right;
}
.grid-scroll {
	position: absolute;
	top: 41px;
	right: 0;
	bottom: 0;
	border-left: 1px solid #fff;
}
.grid-scroll .thumb {
	height: 16px;
	margin: auto 0 5px;
}
.page-scroll {
	width: 16px;
	padding-right: 1px;
}
.page-scroll > .caret {
	margin: 7px 0 5px;
}
.page-scroll .thumb {
	flex: 1 0 auto;
	margin-bottom: -8px;
}

.watermark {
	position: absolute;
	left: 244px;
	bottom: 11px;
	display: flex;
	flex-direction: column;
	align-items: center;
	color: rgba(0, 0, 0, .11);
	font-family: "Open Sans", sans-serif;
	font-size: 26px;
	font-weight: bold;
	line-height: 34px;
	pointer-events: none;
}
.watermark span:first-child {
	font-family: "DejaVu Sans", sans-serif;
	font-size: 46px;
	line-height: 46px;
}
```
